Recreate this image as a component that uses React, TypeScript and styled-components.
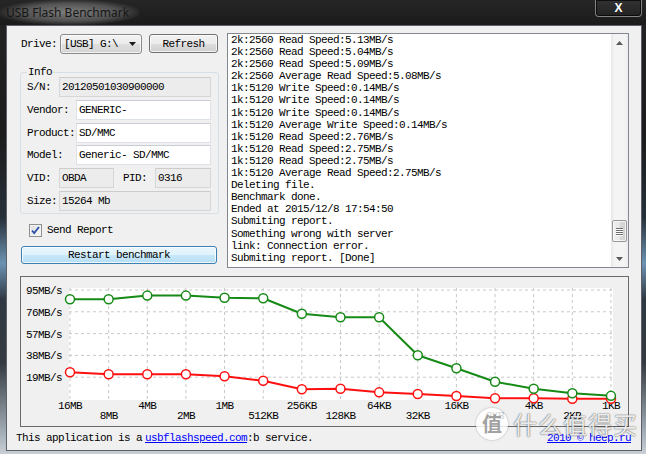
import React from 'react';
import styled, { createGlobalStyle } from 'styled-components';

const MONO = `"Liberation Mono", "DejaVu Sans Mono", monospace`;

const Global = createGlobalStyle`
  html, body { margin: 0; padding: 0; }
  body { width: 646px; height: 454px; overflow: hidden; background: #1b1b1b; }
`;

const Window = styled.div`
  position: relative;
  width: 646px;
  height: 454px;
  display: flex;
  flex-direction: column;
  overflow: hidden;
  background:
    linear-gradient(180deg, #232323 0%, #1c1c1c 30%, #26303a 48%, #6d93b3 58%, #2f3842 66%, #343a40 80%, #a9b3bc 96%, #c9cfd4 100%);
`;

const TitleBar = styled.div`
  height: 25px;
  flex: none;
  display: flex;
  align-items: flex-start;
  justify-content: space-between;
  background: linear-gradient(180deg, #262626, #1a1a1a);
`;

const Title = styled.div`
  padding: 5px 10px 4px 6px;
  font: 12px/16px "Noto Sans", "Liberation Sans", sans-serif;
  color: #161616;
  background: radial-gradient(ellipse at 50% 50%, rgba(255, 255, 255, 0.42) 0%, rgba(255, 255, 255, 0.22) 50%, rgba(255, 255, 255, 0) 75%);
`;

const CloseButton = styled.div`
  width: 47px;
  height: 17px;
  margin-right: 4px;
  box-sizing: border-box;
  border: 1px solid rgba(190, 190, 190, 0.6);
  border-top: none;
  border-radius: 0 0 4px 4px;
  background: linear-gradient(180deg, #323232, #222222);
  box-shadow: inset 0 0 0 1px rgba(0, 0, 0, 0.7);
  color: #fff;
  font: bold 12px/15px "Liberation Sans", sans-serif;
  display: flex;
  align-items: center;
  justify-content: center;
`;

const Client = styled.div`
  margin: 0 4px 0 6px;
  height: 426px;
  flex: none;
  box-sizing: border-box;
  border: 1px solid #5c6268;
  background: #f0f0f0;
  padding: 7px 12px 0 13px;
  display: flex;
  flex-direction: column;
  font: 11px/12px ${MONO};
  letter-spacing: -0.6px;
  color: #000;
`;

const Top = styled.div`
  display: flex;
  gap: 8px;
  height: 235px;
  flex: none;
`;

const LeftPanel = styled.div`
  width: 199px;
  flex: none;
  display: flex;
  flex-direction: column;
  padding-top: 1px;
`;

const DriveRow = styled.div`
  display: flex;
  align-items: flex-start;
  height: 20px;
`;

const DriveLabel = styled.span`
  width: 39px;
  padding-left: 1px;
  line-height: 20px;
`;

const Combo = styled.div`
  width: 82px;
  height: 20px;
  box-sizing: border-box;
  border: 1px solid #8a8a8a;
  border-radius: 3px;
  background: linear-gradient(180deg, #f3f3f3 0%, #ebebeb 50%, #dfdfdf 51%, #d3d3d3 100%);
  box-shadow: inset 0 0 0 1px rgba(255, 255, 255, 0.7);
  display: flex;
  align-items: center;
  justify-content: space-between;
  padding: 0 5px 0 3px;
  line-height: 18px;
`;

const Button = styled.div<{ $primary?: boolean; $w: number; $h: number }>`
  width: ${p => p.$w}px;
  height: ${p => p.$h}px;
  box-sizing: border-box;
  border: 1px solid ${p => (p.$primary ? '#3c7fb1' : '#707070')};
  border-radius: 3px;
  background: ${p =>
    p.$primary
      ? 'linear-gradient(180deg, #eaf6fd 0%, #dff1fb 50%, #c8e8f9 51%, #b7def5 100%)'
      : 'linear-gradient(180deg, #f2f2f2 0%, #ebebeb 50%, #dddddd 51%, #cfcfcf 100%)'};
  box-shadow: inset 0 0 0 1px rgba(255, 255, 255, 0.75);
  display: flex;
  align-items: center;
  justify-content: center;
  line-height: 12px;
`;

const RefreshButton = styled(Button)`
  margin-left: 7px;
`;

const RestartButton = styled(Button)`
  margin: 9px 0 0 1px;
`;

const Group = styled.fieldset`
  margin: 13px 0 0 0;
  padding: 0 7px 2px 6px;
  border: 1px solid #d5dfe5;
  border-radius: 3px;
  min-width: 0;
  display: flex;
  flex-direction: column;
  gap: 2.8px;
`;

const Legend = styled.legend`
  padding: 0 1px;
  line-height: 10px;
`;

const Row = styled.div`
  display: flex;
  align-items: center;
  height: 20px;
`;

const Label = styled.span<{ $w: number; $ml?: number }>`
  width: ${p => p.$w}px;
  margin-left: ${p => p.$ml ?? 0}px;
  flex: none;
  white-space: nowrap;
`;

const Field = styled.div<{ $readonly?: boolean; $w?: number }>`
  ${p => (p.$w ? `width: ${p.$w}px; flex: none;` : 'flex: 1;')}
  height: 20px;
  box-sizing: border-box;
  border: 1px solid ${p => (p.$readonly ? '#d6d6d6' : '#dde2e8')};
  border-top-color: ${p => (p.$readonly ? '#cccccc' : '#c9ced6')};
  background: ${p => (p.$readonly ? '#ececec' : '#ffffff')};
  padding-left: 2px;
  line-height: 18px;
  white-space: nowrap;
  overflow: hidden;
`;

const CheckRow = styled.div`
  display: flex;
  align-items: center;
  height: 13px;
  margin-top: 10px;
  padding-left: 9px;
`;

const CheckBox = styled.div`
  width: 13px;
  height: 13px;
  box-sizing: border-box;
  border: 1px solid #8e8f8f;
  background: linear-gradient(135deg, #dcdcdc, #fbfbfb);
  box-shadow: inset 0 0 0 1px #f4f4f4;
  display: flex;
  align-items: center;
  justify-content: center;
`;

const CheckLabel = styled.span`
  margin-left: 5px;
`;

const Log = styled.div`
  flex: 1;
  display: flex;
  border: 1px solid #828790;
  background: #ffffff;
  min-width: 0;
`;

const LogText = styled.div`
  flex: 1;
  padding-left: 3px;
  line-height: 12.1px;
  white-space: pre;
  overflow: hidden;
`;

const ScrollBar = styled.div`
  width: 17px;
  flex: none;
  display: flex;
  flex-direction: column;
  background: linear-gradient(90deg, #e6e6e6 0%, #f4f4f4 20%, #f4f4f4 80%, #ececec 100%);
`;

const ScrollArrow = styled.div`
  height: 17px;
  flex: none;
  display: flex;
  align-items: center;
  justify-content: center;
`;

const ScrollTrack = styled.div`
  flex: 1;
  display: flex;
  flex-direction: column;
  justify-content: flex-end;
  padding: 0 1px 8px 1px;
`;

const Thumb = styled.div`
  height: 22px;
  box-sizing: border-box;
  border: 1px solid #979797;
  border-radius: 2px;
  background: linear-gradient(90deg, #f1f1f1 0%, #e6e6e6 50%, #d9d9d9 51%, #d0d0d0 100%);
  box-shadow: inset 0 0 0 1px rgba(255, 255, 255, 0.7);
  display: flex;
  flex-direction: column;
  align-items: center;
  justify-content: center;
  gap: 1px;
`;

const Grip = styled.div`
  width: 7px;
  height: 1px;
  background: #6b6b6b;
  box-shadow: 0 1px 0 #ffffff;
`;

const ChartPanel = styled.div`
  margin-top: 8px;
  height: 151px;
  flex: none;
  box-sizing: border-box;
  border: 1px solid #6a6a6a;
  background: #f0f0f0;
`;

const Footer = styled.div`
  margin: 5px -2px 0 -4px;
  display: flex;
  justify-content: space-between;
  line-height: 12px;
  white-space: nowrap;
`;

const Link = styled.a<{ $ml?: number }>`
  color: #0000ff;
  text-decoration: underline;
  margin-left: ${p => p.$ml ?? 0}px;
`;

const Watermark = styled.div`
  position: absolute;
  left: 476px;
  top: 408px;
  display: flex;
  align-items: center;
  gap: 5px;
  pointer-events: none;
`;

const WatermarkBadge = styled.div`
  width: 32px;
  height: 32px;
  border-radius: 50%;
  background: rgba(255, 255, 255, 0.82);
  box-shadow: 0 0 2px rgba(0, 0, 0, 0.35);
  color: rgba(150, 150, 150, 0.9);
  font: 700 20px/32px "Noto Sans CJK SC", sans-serif;
  text-align: center;
`;

const WatermarkText = styled.div`
  color: rgba(255, 255, 255, 0.9);
  text-shadow: 0 0 2px rgba(0, 0, 0, 0.45), 0 0 1px rgba(0, 0, 0, 0.5);
  font: 24px/30px "Noto Sans CJK SC", sans-serif;
  letter-spacing: 1px;
`;

const LOG = [
  '2k:2560 Read Speed:5.13MB/s',
  '2k:2560 Read Speed:5.04MB/s',
  '2k:2560 Read Speed:5.09MB/s',
  '2k:2560 Average Read Speed:5.08MB/s',
  '1k:5120 Write Speed:0.14MB/s',
  '1k:5120 Write Speed:0.14MB/s',
  '1k:5120 Write Speed:0.14MB/s',
  '1k:5120 Average Write Speed:0.14MB/s',
  '1k:5120 Read Speed:2.76MB/s',
  '1k:5120 Read Speed:2.75MB/s',
  '1k:5120 Read Speed:2.75MB/s',
  '1k:5120 Average Read Speed:2.75MB/s',
  'Deleting file.',
  'Benchmark done.',
  'Ended at 2015/12/8 17:54:50',
  'Submiting report.',
  'Something wrong with server',
  'link: Connection error.',
  'Submiting report. [Done]',
];

const SIZES = ['16MB', '8MB', '4MB', '2MB', '1MB', '512KB', '256KB', '128KB', '64KB', '32KB', '16KB', '8KB', '4KB', '2KB', '1KB'];
const READ = [87, 87, 90.1, 90.1, 88.3, 87.8, 74.3, 71.2, 71.2, 38.1, 26.8, 15.1, 9.0, 5.08, 2.75];
const WRITE = [23.3, 21.5, 21.5, 21.5, 19.8, 15.9, 8.5, 9.0, 5.8, 4.4, 2.6, 0.7, 0.7, 0.2, 0.14];
const TICKS = [95, 76, 57, 38, 19];

const X0 = 49;
const DX = 38.64;
const Y0 = 122;
const KY = 109 / 95;
const px = (i: number) => X0 + i * DX;
const py = (v: number) => Y0 - v * KY;

const Chart: React.FC = () => {
  const line = (data: number[]) => data.map((v, i) => `${px(i).toFixed(1)},${py(v).toFixed(1)}`).join(' ');
  const series = [
    { data: WRITE, color: '#ff1010' },
    { data: READ, color: '#168a16' },
  ];
  return (
    <svg width="607" height="149" viewBox="0 0 607 149" style={{ display: 'block' }}>
      <rect x="48" y="11" width="544" height="112" fill="#ffffff" />
      {SIZES.map((_, i) => (
        <line key={`v${i}`} x1={px(i)} x2={px(i)} y1="11" y2="123" stroke="#c8c8c8" strokeDasharray="3 3" />
      ))}
      {TICKS.map(t => (
        <line key={`h${t}`} x1="48" x2="592" y1={py(t)} y2={py(t)} stroke="#c8c8c8" strokeDasharray="3 3" />
      ))}
      <g fontFamily={MONO} fontSize="11" letterSpacing="-0.6" fill="#000">
        {TICKS.map(t => (
          <text key={`t${t}`} x="41" y={py(t) + 4} textAnchor="end">
            {t}MB/s
          </text>
        ))}
        {SIZES.map((s, i) => (
          <text key={`s${s}`} x={px(i)} y={i % 2 === 0 ? 132 : 142} textAnchor="middle">
            {s}
          </text>
        ))}
      </g>
      {series.map(s => (
        <g key={s.color}>
          <polyline points={line(s.data)} fill="none" stroke={s.color} strokeWidth="2" strokeLinejoin="round" />
          {s.data.map((v, i) => (
            <circle key={i} cx={px(i)} cy={py(v)} r="4.5" fill="#ffffff" stroke={s.color} strokeWidth="1.5" />
          ))}
        </g>
      ))}
    </svg>
  );
};

const App: React.FC = () => (
  <>
    <Global />
    <Window>
      <TitleBar>
        <Title>USB Flash Benchmark</Title>
        <CloseButton>X</CloseButton>
      </TitleBar>
      <Client>
        <Top>
          <LeftPanel>
            <DriveRow>
              <DriveLabel>Drive:</DriveLabel>
              <Combo>
                <span>[USB] G:\</span>
                <svg width="7" height="4" viewBox="0 0 7 4">
                  <path d="M0 0h7L3.5 4z" fill="#1a1a1a" />
                </svg>
              </Combo>
              <RefreshButton $w={69} $h={19}>Refresh</RefreshButton>
            </DriveRow>
            <Group>
              <Legend>Info</Legend>
              <Row>
                <Label $w={32}>S/N:</Label>
                <Field $readonly>20120501030900000</Field>
              </Row>
              <Row>
                <Label $w={49}>Vendor:</Label>
                <Field>GENERIC-</Field>
              </Row>
              <Row>
                <Label $w={49}>Product:</Label>
                <Field>SD/MMC</Field>
              </Row>
              <Row>
                <Label $w={49}>Model:</Label>
                <Field>Generic- SD/MMC</Field>
              </Row>
              <Row>
                <Label $w={32}>VID:</Label>
                <Field $readonly $w={55}>OBDA</Field>
                <Label $w={32} $ml={9}>PID:</Label>
                <Field $readonly>0316</Field>
              </Row>
              <Row>
                <Label $w={32}>Size:</Label>
                <Field $readonly>15264 Mb</Field>
              </Row>
            </Group>
            <CheckRow>
              <CheckBox>
                <svg width="9" height="9" viewBox="0 0 9 9">
                  <path d="M1 4.5l2.2 2.6L8 1" fill="none" stroke="#2a4fa8" strokeWidth="1.8" />
                </svg>
              </CheckBox>
              <CheckLabel>Send Report</CheckLabel>
            </CheckRow>
            <RestartButton $primary $w={196} $h={18}>Restart benchmark</RestartButton>
          </LeftPanel>
          <Log>
            <LogText>{LOG.join('\n')}</LogText>
            <ScrollBar>
              <ScrollArrow>
                <svg width="7" height="4" viewBox="0 0 7 4">
                  <path d="M0 4h7L3.5 0z" fill="#5a5a5a" />
                </svg>
              </ScrollArrow>
              <ScrollTrack>
                <Thumb>
                  <Grip />
                  <Grip />
                  <Grip />
                  <Grip />
                </Thumb>
              </ScrollTrack>
              <ScrollArrow>
                <svg width="7" height="4" viewBox="0 0 7 4">
                  <path d="M0 0h7L3.5 4z" fill="#5a5a5a" />
                </svg>
              </ScrollArrow>
            </ScrollBar>
          </Log>
        </Top>
        <ChartPanel>
          <Chart />
        </ChartPanel>
        <Footer>
          <span>
            This application is a<Link $ml={3}>usbflashspeed.com</Link>:b service.
          </span>
          <Link>2010 © heep.ru</Link>
        </Footer>
      </Client>
      <Watermark>
        <WatermarkBadge>值</WatermarkBadge>
        <WatermarkText>什么值得买</WatermarkText>
      </Watermark>
    </Window>
  </>
);

export default App;
